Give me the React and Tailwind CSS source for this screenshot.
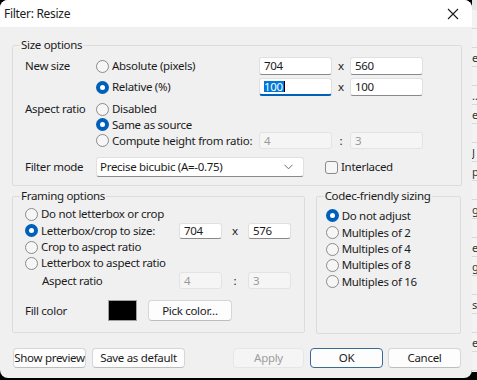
import React from "react";

function Radio({ checked, label }) {
  return (
    <div className="flex items-center gap-[3px]">
      {checked ? (
        <span className="w-[13px] h-[13px] rounded-full bg-[#005fb8] flex items-center justify-center shrink-0">
          <span className="w-[5px] h-[5px] rounded-full bg-white" />
        </span>
      ) : (
        <span className="w-[13px] h-[13px] rounded-full border border-[#8a8a8a] bg-[#f6f6f6] shrink-0" />
      )}
      <span className="whitespace-nowrap">{label}</span>
    </div>
  );
}

function Field({ value, w, h = "h-[18px]", disabled, focused }) {
  if (disabled) {
    return (
      <div className={`${w} ${h} bg-[#f5f5f5] border border-[#e3e3e3] rounded-[3px] pl-[4px] flex items-center text-[#9a9a9a]`}>
        {value}
      </div>
    );
  }
  if (focused) {
    return (
      <div className={`${w} ${h} bg-white border border-[#e0e0e0] border-b-2 border-b-[#005fb8] rounded-[3px] pl-[4px] flex items-center`}>
        <span className="bg-[#0078d7] text-white leading-[11px] pr-[1px]">{value}</span>
        <span className="w-px h-[11px] bg-black" />
      </div>
    );
  }
  return (
    <div className={`${w} ${h} bg-white border border-[#e0e0e0] border-b-[#8a8a8a] rounded-[3px] pl-[4px] flex items-center`}>
      {value}
    </div>
  );
}

function Button({ children, w, disabled, primary }) {
  let cls = "bg-[#fdfdfd] border-[#d6d6d6] border-b-[#bdbdbd] text-[#1b1b1b]";
  if (disabled) cls = "bg-[#f5f5f5] border-[#e6e6e6] text-[#9d9d9d]";
  if (primary) cls = "bg-[#fdfdfd] border-[#3c6a94] text-[#1b1b1b]";
  return (
    <div className={`${w} h-[20px] border rounded-[4px] flex items-center justify-center whitespace-nowrap ${cls}`}>
      {children}
    </div>
  );
}

export default function App() {
  const stripRows = ["", "", "e", "", "…", "e", "", "J", "p", "", "g", "", "e", "g", "", "s", "", "e", ""];
  return (
    <div className="w-[477px] h-[380px] bg-black flex overflow-hidden font-['Noto_Sans',sans-serif] text-[11.5px] tracking-[-0.3px] text-[#1b1b1b]">
      <div className="w-[472px] h-[378px] bg-[#f0f0f0] rounded-lg overflow-hidden flex flex-col shrink-0">
        {/* Title bar */}
        <div className="h-[27px] bg-white flex items-center justify-between pl-[4px] pr-[10px] shrink-0">
          <span className="text-[12px]">Filter: Resize</span>
          <svg width="12" height="12" viewBox="0 0 12 12" className="mr-[3px]">
            <path d="M1 1 L11 11 M11 1 L1 11" stroke="#1b1b1b" strokeWidth="1.1" />
          </svg>
        </div>

        <div className="pl-[12px] pr-[11px] pt-[10px] flex flex-col">
          {/* Size options */}
          <fieldset className="w-[450px] border border-[#dcdcdc] rounded-[2px] p-0 m-0">
            <legend className="ml-[7px] px-[1px] leading-[16px]">Size options</legend>
            <div className="pl-[12px] flex flex-col">
              <div className="mt-[4px] h-[18px] flex items-center">
                <span className="w-[71px]">New size</span>
                <div className="w-[163px]"><Radio label="Absolute (pixels)" /></div>
                <Field value="704" w="w-[73px]" />
                <span className="w-[18px] text-center">x</span>
                <Field value="560" w="w-[73px]" />
              </div>
              <div className="mt-[3px] h-[18px] flex items-center">
                <span className="w-[71px]" />
                <div className="w-[163px]"><Radio checked label="Relative (%)" /></div>
                <Field value="100" w="w-[73px]" focused />
                <span className="w-[18px] text-center">x</span>
                <Field value="100" w="w-[73px]" />
              </div>
              <div className="mt-[5px] h-[16px] flex items-center">
                <span className="w-[71px]">Aspect ratio</span>
                <Radio label="Disabled" />
              </div>
              <div className="h-[15px] flex items-center">
                <span className="w-[71px]" />
                <Radio checked label="Same as source" />
              </div>
              <div className="h-[17px] flex items-center">
                <span className="w-[71px]" />
                <div className="w-[163px]"><Radio label="Compute height from ratio:" /></div>
                <Field value="4" w="w-[73px]" h="h-[17px]" disabled />
                <span className="w-[18px] text-center">:</span>
                <Field value="3" w="w-[73px]" h="h-[17px]" disabled />
              </div>
              <div className="mt-[8px] mb-[8px] h-[20px] flex items-center">
                <span className="w-[71px]">Filter mode</span>
                <div className="w-[208px] h-[20px] bg-white border border-[#e0e0e0] border-b-[#8a8a8a] rounded-[3px] pl-[3px] pr-[10px] flex items-center justify-between">
                  <span>Precise bicubic (A=-0.75)</span>
                  <svg width="9" height="6" viewBox="0 0 9 6">
                    <path d="M0.5 0.8 L4.5 4.8 L8.5 0.8" fill="none" stroke="#6b6b6b" strokeWidth="1" />
                  </svg>
                </div>
                <div className="ml-[21px] flex items-center gap-[3px]">
                  <span className="w-[13px] h-[13px] rounded-[3px] border border-[#8a8a8a] bg-[#f6f6f6]" />
                  <span>Interlaced</span>
                </div>
              </div>
            </div>
          </fieldset>

          <div className="mt-[2px] flex gap-[11px]">
            {/* Framing options */}
            <fieldset className="w-[294px] h-[145px] border border-[#dcdcdc] rounded-[2px] p-0 m-0">
              <legend className="ml-[7px] px-[1px] leading-[16px]">Framing options</legend>
              <div className="pl-[12px] pt-[2px] flex flex-col">
                <div className="h-[16px] flex items-center"><Radio label="Do not letterbox or crop" /></div>
                <div className="h-[17px] flex items-center">
                  <div className="w-[154px]"><Radio checked label="Letterbox/crop to size:" /></div>
                  <Field value="704" w="w-[43px]" h="h-[16px]" />
                  <span className="w-[26px] text-center">x</span>
                  <Field value="576" w="w-[43px]" h="h-[16px]" />
                </div>
                <div className="h-[16px] flex items-center"><Radio label="Crop to aspect ratio" /></div>
                <div className="h-[16px] flex items-center"><Radio label="Letterbox to aspect ratio" /></div>
                <div className="mt-[1px] h-[17px] flex items-center">
                  <span className="w-[154px] pl-[17px]">Aspect ratio</span>
                  <Field value="4" w="w-[43px]" h="h-[17px]" disabled />
                  <span className="w-[26px] text-center">:</span>
                  <Field value="3" w="w-[43px]" h="h-[17px]" disabled />
                </div>
                <div className="mt-[11px] h-[21px] flex items-center">
                  <span className="w-[83px]">Fill color</span>
                  <div className="w-[29px] h-[21px] bg-black border border-[#a0a0a0]" />
                  <div className="ml-[11px]">
                    <div className="w-[84px] h-[21px] bg-[#fdfdfd] border border-[#d6d6d6] border-b-[#bdbdbd] rounded-[4px] flex items-center justify-center">Pick color…</div>
                  </div>
                </div>
              </div>
            </fieldset>

            {/* Codec-friendly sizing */}
            <fieldset className="w-[146px] h-[146px] border border-[#dcdcdc] rounded-[2px] p-0 m-0">
              <legend className="ml-[7px] px-[1px] leading-[16px]">Codec-friendly sizing</legend>
              <div className="pl-[9px] pt-[3px] flex flex-col">
                <div className="h-[17px] flex items-center"><Radio checked label="Do not adjust" /></div>
                <div className="h-[17px] flex items-center"><Radio label="Multiples of 2" /></div>
                <div className="h-[16px] flex items-center"><Radio label="Multiples of 4" /></div>
                <div className="h-[16px] flex items-center"><Radio label="Multiples of 8" /></div>
                <div className="h-[17px] flex items-center"><Radio label="Multiples of 16" /></div>
              </div>
            </fieldset>
          </div>

          {/* Buttons */}
          <div className="mt-[14px] flex items-center">
            <div className="ml-[1px]"><Button w="w-[73px]">Show preview</Button></div>
            <div className="ml-[6px]"><Button w="w-[93px]">Save as default</Button></div>
            <div className="ml-[48px]"><Button w="w-[71px]" disabled>Apply</Button></div>
            <div className="ml-[6px]"><Button w="w-[73px]" primary>OK</Button></div>
            <div className="ml-[5px]"><Button w="w-[73px]">Cancel</Button></div>
          </div>
        </div>
      </div>

      {/* Background window strip */}
      <div className="w-[5px] h-[372px] bg-[#f3f3f3] flex flex-col overflow-hidden shrink-0 text-[11px] text-[#333]">
        <div className="h-[10px] bg-[#e6e6e6]" />
        {stripRows.map((t, i) => (
          <div key={i} className="h-[19px] border-b border-[#d9d9d9] flex items-center leading-none whitespace-nowrap">{t}</div>
        ))}
      </div>
    </div>
  );
}
